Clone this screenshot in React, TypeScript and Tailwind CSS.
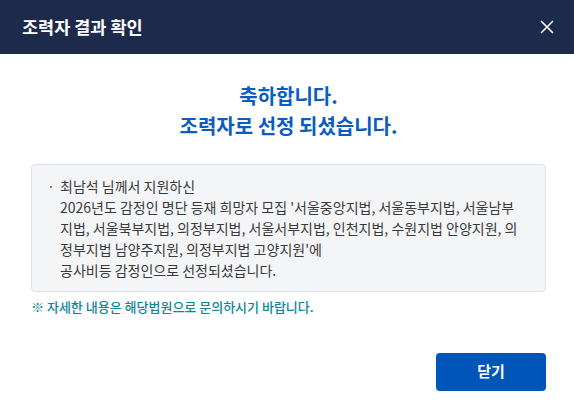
import { X } from 'lucide-react';

export default function App() {
  return (
    <div
      className="w-[574px] h-[418px] bg-white flex flex-col"
      style={{ fontFamily: '"Noto Sans CJK KR", "Noto Sans", sans-serif' }}
    >
      {/* Header */}
      <header className="h-[54px] bg-[#1e2a4b] flex items-center justify-between pl-[22px] pr-[16px] shrink-0">
        <h1 className="text-white text-[17.5px] font-bold">조력자 결과 확인</h1>
        <button className="text-white">
          <X className="w-[22px] h-[22px]" strokeWidth={1.8} />
        </button>
      </header>

      <div className="flex flex-col flex-1 pl-[31px] pr-[28px]">
        <div className="text-center text-[#0b5cbf] text-[20px] font-bold leading-[30px] pt-[27px] pb-[23px]">
          <p>축하합니다.</p>
          <p>조력자로 선정 되셨습니다.</p>
        </div>

        <div className="bg-[#f4f5f7] border border-[#dfe2e6] rounded-[4px] pl-[15px] pr-[26px] pt-[11px] pb-[10px] text-[14px] leading-[21px] text-[#3a3a3a]">
          <div className="flex">
            <span className="w-[13px] shrink-0 text-[#666]">·</span>
            <div>
              최남석 님께서 지원하신
              <br />
              2026년도 감정인 명단 등재 희망자 모집 '서울중앙지법, 서울동부지법, 서울남부지법, 서울북부지법, 의정부지법, 서울서부지법, 인천지법, 수원지법 안양지원, 의정부지법 남양주지원, 의정부지법 고양지원'에
              <br />
              공사비등 감정인으로 선정되셨습니다.
            </div>
          </div>
        </div>

        <p className="text-[13px] font-medium text-[#0f869b] mt-[5px]">※ 자세한 내용은 해당법원으로 문의하시기 바랍니다.</p>

        <div className="flex justify-end mt-[36px]">
          <button className="w-[110px] h-[38px] bg-[#0055b8] rounded-[4px] text-white text-[15px] font-bold">
            닫기
          </button>
        </div>
      </div>
    </div>
  );
}
